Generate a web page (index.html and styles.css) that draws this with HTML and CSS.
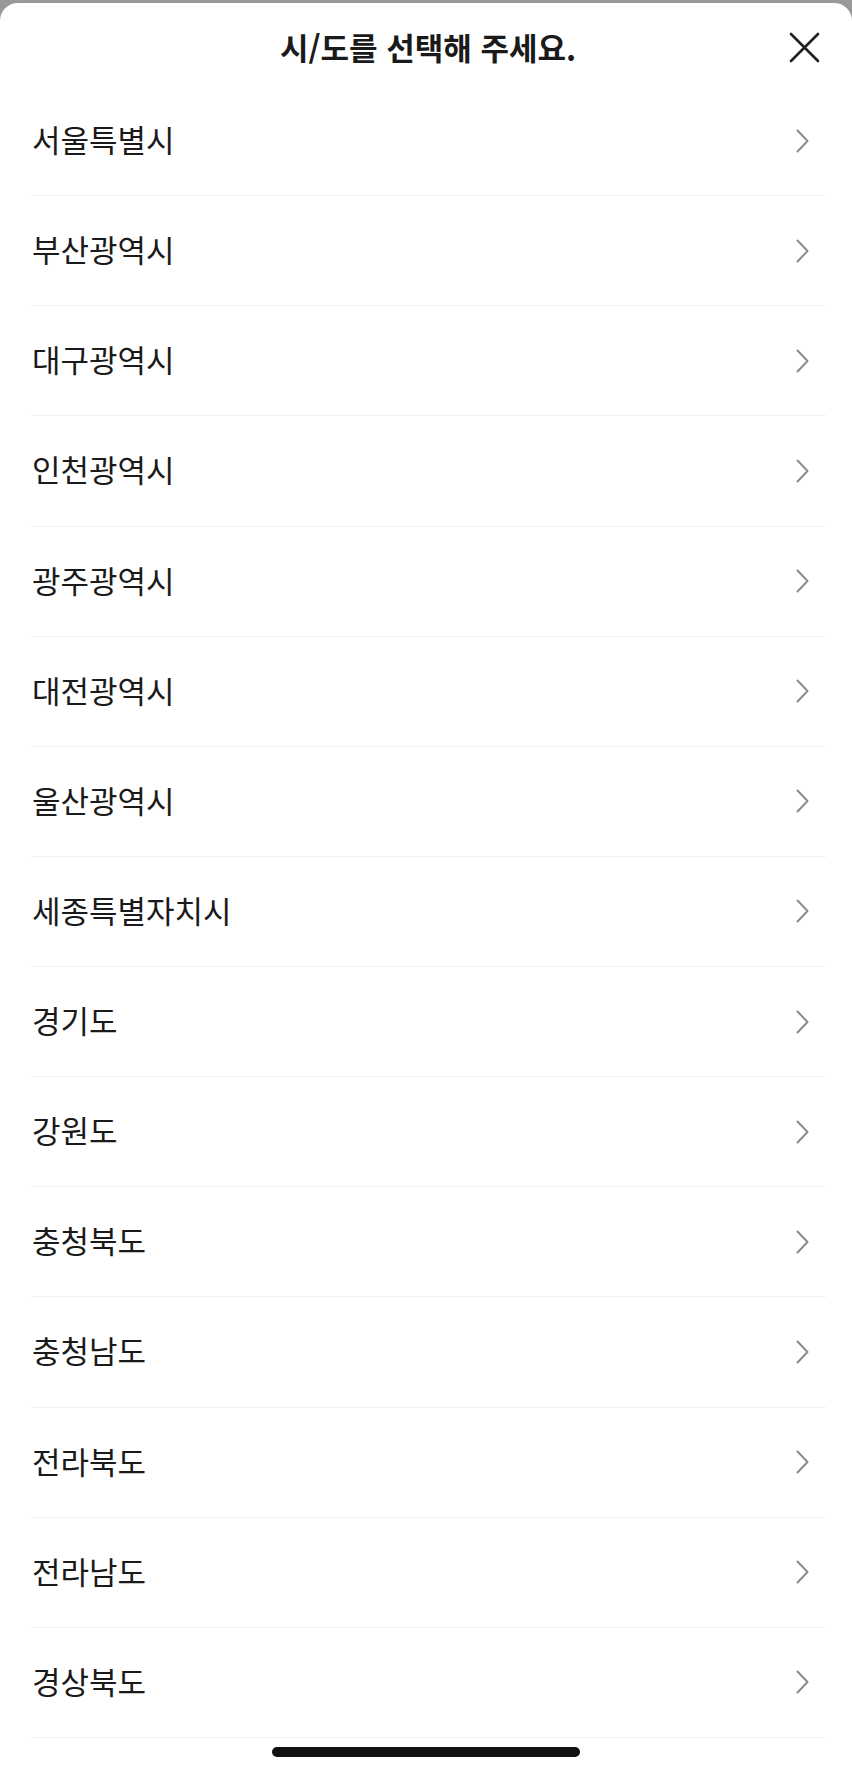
FILE: index.html
```html
<!DOCTYPE html>
<html lang="ko">
<head>
    <meta charset="UTF-8">
    <meta name="viewport" content="width=device-width, initial-scale=1.0">
    <title>시/도 선택</title>
    <link rel="stylesheet" href="styles.css">
</head>
<body>

    <div class="sheet">
        <div class="sheet-header">
            <span></span>
            <h1>시/도를 선택해 주세요.</h1>
            <button class="close-btn" type="button" aria-label="닫기">
                <svg width="31" height="31" viewBox="0 0 31 31">
                    <path d="M2 2 L29 29 M29 2 L2 29" stroke="#1f1f1f" stroke-width="2.6" stroke-linecap="round" fill="none"/>
                </svg>
            </button>
        </div>

        <ul class="region-list">
            <li class="region-item"><span>서울특별시</span><svg class="chevron" width="13" height="24" viewBox="0 0 13 24"><path d="M1.5 1.5 L11.5 12 L1.5 22.5" /></svg></li>
            <li class="region-item"><span>부산광역시</span><svg class="chevron" width="13" height="24" viewBox="0 0 13 24"><path d="M1.5 1.5 L11.5 12 L1.5 22.5" /></svg></li>
            <li class="region-item"><span>대구광역시</span><svg class="chevron" width="13" height="24" viewBox="0 0 13 24"><path d="M1.5 1.5 L11.5 12 L1.5 22.5" /></svg></li>
            <li class="region-item"><span>인천광역시</span><svg class="chevron" width="13" height="24" viewBox="0 0 13 24"><path d="M1.5 1.5 L11.5 12 L1.5 22.5" /></svg></li>
            <li class="region-item"><span>광주광역시</span><svg class="chevron" width="13" height="24" viewBox="0 0 13 24"><path d="M1.5 1.5 L11.5 12 L1.5 22.5" /></svg></li>
            <li class="region-item"><span>대전광역시</span><svg class="chevron" width="13" height="24" viewBox="0 0 13 24"><path d="M1.5 1.5 L11.5 12 L1.5 22.5" /></svg></li>
            <li class="region-item"><span>울산광역시</span><svg class="chevron" width="13" height="24" viewBox="0 0 13 24"><path d="M1.5 1.5 L11.5 12 L1.5 22.5" /></svg></li>
            <li class="region-item"><span>세종특별자치시</span><svg class="chevron" width="13" height="24" viewBox="0 0 13 24"><path d="M1.5 1.5 L11.5 12 L1.5 22.5" /></svg></li>
            <li class="region-item"><span>경기도</span><svg class="chevron" width="13" height="24" viewBox="0 0 13 24"><path d="M1.5 1.5 L11.5 12 L1.5 22.5" /></svg></li>
            <li class="region-item"><span>강원도</span><svg class="chevron" width="13" height="24" viewBox="0 0 13 24"><path d="M1.5 1.5 L11.5 12 L1.5 22.5" /></svg></li>
            <li class="region-item"><span>충청북도</span><svg class="chevron" width="13" height="24" viewBox="0 0 13 24"><path d="M1.5 1.5 L11.5 12 L1.5 22.5" /></svg></li>
            <li class="region-item"><span>충청남도</span><svg class="chevron" width="13" height="24" viewBox="0 0 13 24"><path d="M1.5 1.5 L11.5 12 L1.5 22.5" /></svg></li>
            <li class="region-item"><span>전라북도</span><svg class="chevron" width="13" height="24" viewBox="0 0 13 24"><path d="M1.5 1.5 L11.5 12 L1.5 22.5" /></svg></li>
            <li class="region-item"><span>전라남도</span><svg class="chevron" width="13" height="24" viewBox="0 0 13 24"><path d="M1.5 1.5 L11.5 12 L1.5 22.5" /></svg></li>
            <li class="region-item"><span>경상북도</span><svg class="chevron" width="13" height="24" viewBox="0 0 13 24"><path d="M1.5 1.5 L11.5 12 L1.5 22.5" /></svg></li>
        </ul>

        <div class="home-indicator"></div>
    </div>

</body>
</html>
```

FILE: styles.css
```css
body {
    font-family: "Noto Sans CJK KR", "Noto Sans", sans-serif;
    margin: 0;
    background-color: #999;
    color: #1a1a1a;
}
.sheet {
    margin-top: 3px;
    min-height: 1771px;
    background-color: #fff;
    border-radius: 18px 18px 0 0;
    overflow: hidden;
}
.sheet-header {
    display: grid;
    grid-template-columns: 1fr auto 1fr;
    align-items: center;
    height: 83px;
    padding: 4px 32px 0;
    box-sizing: border-box;
}
h1 {
    margin: 0;
    padding-left: 4px;
    font-size: 31px;
    font-weight: 700;
    line-height: 1;
    color: #1a1a1a;
}
.close-btn {
    justify-self: end;
    width: 31px;
    height: 31px;
    margin-top: 2px;
    padding: 0;
    border: none;
    background: none;
    cursor: pointer;
}
.close-btn svg {
    display: block;
}
.region-list {
    list-style: none;
    margin: 0 26px 0 31px;
    padding: 0;
}
.region-item {
    display: flex;
    align-items: center;
    justify-content: space-between;
    height: 110.14px;
    padding-right: 17px;
    box-sizing: border-box;
    border-bottom: 1px solid #f0f0f0;
    font-size: 31px;
    line-height: 1;
    cursor: pointer;
}
.region-item span {
    padding: 0 0 4px 1px;
}
.chevron path {
    fill: none;
    stroke: #8c8c8c;
    stroke-width: 2;
    stroke-linecap: round;
    stroke-linejoin: round;
}
.home-indicator {
    width: 308px;
    height: 10px;
    margin: 9px auto 0;
    background-color: #111;
    border-radius: 5px;
}
```
